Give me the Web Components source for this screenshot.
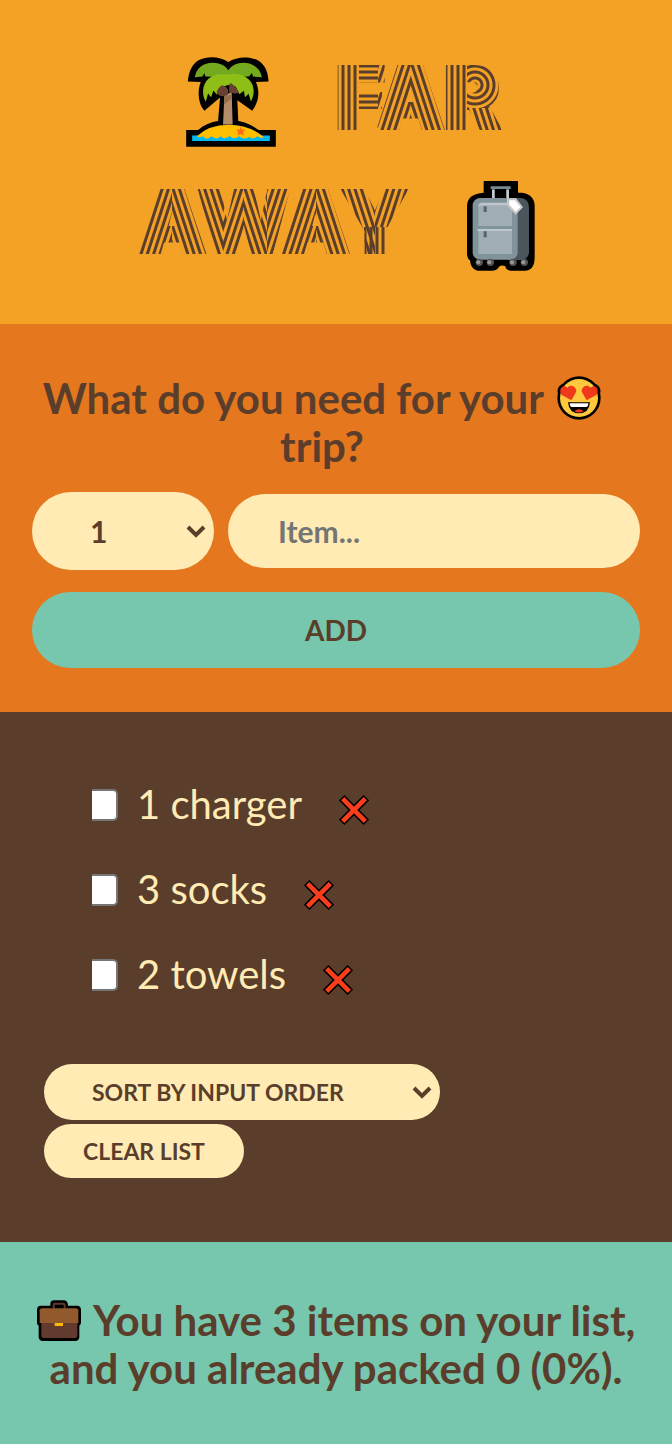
<!DOCTYPE html>
<html lang="en">
<head>
<meta charset="utf-8">
<meta name="viewport" content="width=device-width, initial-scale=1">
<title>Far Away</title>
<style>
  html { --brown: #5a3e2b; --cream: #ffebb3; --teal: #76c7ad; --amber: #f4a226; --orange: #e5771f; }
  body { margin: 0; background: var(--teal); color: var(--brown); font-family: Lato, "Open Sans", sans-serif; }
</style>
</head>
<body>
<travel-app></travel-app>

<template id="t-app">
  <style>
    :host { display: flex; flex-direction: column; min-height: 100vh; }
    packing-stats { flex: 1; }
  </style>
  <travel-logo></travel-logo>
  <travel-form></travel-form>
  <packing-list>
    <packing-item quantity="1">charger</packing-item>
    <packing-item quantity="3">socks</packing-item>
    <packing-item quantity="2">towels</packing-item>
  </packing-list>
  <packing-stats></packing-stats>
</template>

<template id="t-logo">
  <style>
    :host {
      display: block; background: var(--amber); padding: 40px 32px 36px;
      --stops: var(--brown) 0, var(--brown) 2px, transparent 3px, transparent 5px, var(--brown) 6px;
      --up: repeating-linear-gradient(108deg, var(--stops));
      --down: repeating-linear-gradient(72deg, var(--stops));
      --stem: repeating-linear-gradient(90deg, var(--stops));
      --bar: repeating-linear-gradient(180deg, var(--stops));
      --bowl: repeating-radial-gradient(circle at 8px 43px, var(--stops));
    }
    h1 { margin: 0; font: 900 84px/112px Inter, Lato, sans-serif; text-transform: uppercase; }
    .row { display: flex; justify-content: center; align-items: center; gap: 58px; min-height: 124px; }
    .row:first-child { padding-left: 16px; }
    /* Striped lettering: each background strip follows the strokes of the letter above it. */
    .word { padding: 0 2px 8px; color: transparent; -webkit-text-stroke: 4px transparent; background-repeat: no-repeat; -webkit-background-clip: text; background-clip: text; }
    .far {
      background-image: var(--stem), var(--bar), var(--up), var(--down), var(--stem), var(--bowl), var(--down);
      background-size: 23px 100%, 19px 100%, 33px 100%, 34px 100%, 22px 100%, 40px 66px, 40px 60px;
      background-position: 2px 0, 25px 5px, 44px 0, 77px 0, 111px 0, 133px 0, 133px 66px;
    }
    .away {
      background-image: var(--stem), var(--up), var(--down), var(--up), var(--down), var(--up), var(--down), var(--up);
      background-size: 24px 60px, 35px 100%, 51px 100%, 21px 100%, 23px 100%, 49px 100%, 48px 100%, 50px 61px;
      background-position: 227px 61px, 0 0, 35px 0, 86px 0, 107px 0, 130px 0, 179px 0, 227px 0;
      background-size: 24px 60px, 35px 100%, 51px 100%, 21px 100%, 23px 100%, 49px 100%, 59px 100%, 50px 61px;
      background-position: 227px 61px, 0 0, 35px 0, 86px 0, 107px 0, 130px 0, 179px 0, 238px 0;
    }
    travel-icon { flex: none; }
  </style>
  <h1>
    <span class="row"><travel-icon name="palm"></travel-icon><span class="word far">Far</span></span>
    <span class="row"><span class="word away">Away</span><travel-icon name="luggage"></travel-icon></span>
  </h1>
</template>

<template id="t-form">
  <style>
    :host { display: block; background: var(--orange); padding: 50px 32px 44px; }
    h3 { margin: 0 28px 22px 0; font-size: 42px; line-height: 48px; font-weight: 700; text-align: center; }
    travel-icon { margin-left: 4px; vertical-align: -6px; }
    form { display: grid; grid-template-columns: 182px minmax(0, 1fr); gap: 22px 14px; align-items: center; }
    input, button { box-sizing: border-box; width: 100%; border: 0; border-radius: 40px; font: 700 30px/36px Lato, sans-serif; color: var(--brown); }
    input { height: 74px; padding: 0 50px; background: var(--cream); }
    input::placeholder { color: #757575; opacity: 1; }
    button { grid-column: 1 / -1; height: 76px; background: var(--teal); font-size: 28px; text-transform: uppercase; }
    pill-select { --height: 78px; --size: 30px; --pad: 58px; }
  </style>
  <h3>What do you need for your <travel-icon name="love"></travel-icon> trip?</h3>
  <form>
    <pill-select label="Quantity" options="1|2|3|4|5"></pill-select>
    <input type="text" placeholder="Item..." aria-label="Item">
    <button type="button">Add</button>
  </form>
</template>

<template id="t-select">
  <style>
    :host { display: grid; align-items: center; }
    select, svg { grid-area: 1 / 1; }
    select { appearance: none; box-sizing: border-box; width: 100%; height: var(--height); margin: 0; border: 0; border-radius: 40px;
      padding: 0 48px 0 var(--pad); background: var(--cream); color: var(--brown); font: 700 var(--size) Lato, sans-serif; text-transform: uppercase; }
    svg { justify-self: end; margin-right: 8px; pointer-events: none; z-index: 1; }
  </style>
  <select></select>
  <svg width="20" height="13" viewBox="0 0 20 13" aria-hidden="true"><path d="M2 2l8 8 8-8" fill="none" stroke="#5a3e2b" stroke-width="4"/></svg>
</template>

<template id="t-list">
  <style>
    :host { display: block; background: var(--brown); color: var(--cream); padding: 68px 44px 64px; }
    ul { list-style: none; margin: 0 0 65px; padding: 0 48px; display: grid; gap: 36px; }
    .actions { display: grid; justify-items: start; gap: 4px; }
    pill-select { width: 396px; max-width: 100%; --height: 56px; --size: 23px; --pad: 48px; }
    button { height: 54px; padding: 0 39px; border: 0; border-radius: 40px; background: var(--cream); color: var(--brown);
      font: 700 23px Lato, sans-serif; text-transform: uppercase; }
  </style>
  <ul role="list"><slot></slot></ul>
  <div class="actions">
    <pill-select label="Sort order" options="Sort by input order|Sort by description|Sort by packed status"></pill-select>
    <button type="button">Clear list</button>
  </div>
</template>

<template id="t-item">
  <style>
    :host { display: flex; align-items: center; font-size: 40px; line-height: 49px; }
    label { display: flex; align-items: center; gap: 19px; }
    input { appearance: none; margin: 0; width: 26px; height: 32px; box-sizing: border-box; background: #fff;
      border: 2px solid #767676; border-left: 0; border-radius: 0 5px 5px 0; }
    input:checked { background: var(--teal); }
    button { display: flex; margin: 11px 0 0 37px; padding: 0; border: 0; background: none; }
  </style>
  <label><input type="checkbox"><span><span class="quantity"></span> <slot></slot></span></label>
  <button type="button" aria-label="Remove"><travel-icon name="cross"></travel-icon></button>
</template>

<template id="t-stats">
  <style>
    :host { display: block; background: var(--teal); padding: 54px 24px 52px; font-size: 42px; line-height: 48px; font-weight: 700; text-align: center; }
    travel-icon { margin-right: 4px; vertical-align: -5px; }
  </style>
  <footer><travel-icon name="briefcase"></travel-icon> You have 3 items on your list, and you already packed 0 (0%).</footer>
</template>

<script>
  const template = id => document.getElementById('t-' + id).content.cloneNode(true);

  const icons = {
    palm: [90, 90, '39 35 270 271', `
      <path d="M44 109C46 83 55 58 76 45C105 30 142 34 166 50C190 34 229 31 257 46C278 59 286 83 287 109L249 110C259 132 262 164 238 197L193 165L196 228C220 232 240 242 257 255H309V305H39V255H75C92 240 114 231 135 228L141 157L94 197C75 177 72 136 83 110Z" fill="#000"/>
      <path d="M65 96C70 67 91 52 119 52C145 52 160 64 166 75C174 61 191 52 211 52C239 52 262 68 267 96L240 94L237 83L228 94L166 96L97 94L94 83L88 94Z" fill="#73a91e"/>
      <path d="M150 238L154 151L176 140L179 238Z" fill="#b58c69"/><path d="M154 153L176 149L176 160L153 178Z" fill="#946f4c"/>
      <path d="M98 170C82 142 90 107 116 94C130 85 150 86 165 88C187 82 205 88 219 96C245 111 248 145 234 169L227 146L216 156L213 137L199 147L188 124L165 119L145 126L131 148L121 136L114 156L105 145Z" fill="#8dbf16"/>
      <path d="M147 120Q160 123 165 133V148Q154 157 139 151L131 144Q131 130 147 120ZM169 117L174 113L186 124L199 143Q182 149 168 139Z" fill="#6a4131"/>
      <path d="M57 271H291V288H57Z" fill="#00b8ef"/>
      <path d="M71 274Q107 239 167 239Q228 239 273 276L266 280L253 274Q239 286 229 275Q214 287 199 274Q181 286 171 273Q153 286 143 274Q131 287 115 274Q101 288 89 274Q78 280 71 274Z" fill="#ffbe00"/>
      <path d="M203 244L207 253L217 254L210 261L213 271L203 267L194 271L196 261L190 253L200 254Z" fill="#ff6a13"/>`],
    luggage: [68, 90, '49 33 204 270', `
      <path d="M99 33H202V68H214Q250 73 252 106V262Q252 303 221 302H178Q166 300 164 289Q154 284 145 290Q138 304 119 302H80Q60 298 58 271Q50 267 49 252V105Q52 71 99 68Z" fill="#000"/>
      <path d="M120 53H180M128 53V88M171 53V91" stroke="#78898f" stroke-width="8" fill="none"/><path d="M128 60V84M171 60V84" stroke="#c9d0d2" stroke-width="7"/>
      <path d="M172 84H210Q235 86 235 112V247Q233 267 214 270H172Z" fill="#4b555c"/>
      <rect x="66" y="84" width="135" height="185" rx="22" fill="#82949b"/>
      <path d="M83 110Q83 101 94 101H184V168H83ZM83 184H184V252H83Z" fill="#a0adb2"/>
      <path d="M83 110Q83 98 94 98H175V106H94Q86 106 83 110ZM81 177H184V184H81Z" fill="#bdc7cb"/>
      <path d="M99 109H108V126H99ZM99 184H108V202H99Z" fill="#52636b"/>
      <path d="M169 85L196 84L217 112L195 134L169 106Z" fill="#c8c8c8"/><path d="M176 91L193 91L210 111L195 125L176 104Z" fill="#fff"/>
      <g fill="#555"><circle cx="86" cy="277" r="11"/><circle cx="119" cy="277" r="11"/><circle cx="187" cy="277" r="11"/><circle cx="221" cy="277" r="11"/></g>
      <g fill="#999"><circle cx="83" cy="277" r="6"/><circle cx="116" cy="277" r="6"/><circle cx="184" cy="277" r="6"/><circle cx="218" cy="277" r="6"/></g>`],
    love: [44, 44, '39 34 132 132', `
      <path d="M82 107L52 90C42 72 58 58 70 69C83 54 101 70 96 83ZM128 107L158 90C168 72 152 58 140 69C127 54 109 70 114 83Z" stroke="#000" stroke-width="16"/>
      <circle cx="105" cy="100" r="65" fill="#000"/>
      <circle cx="105" cy="100" r="57" fill="#ffc83d"/>
      <path d="M82 107L52 90C42 72 58 58 70 69C83 54 101 70 96 83ZM128 107L158 90C168 72 152 58 140 69C127 54 109 70 114 83Z" fill="#f0391b"/>
      <path d="M72 113H138Q135 146 105 146Q75 146 72 113Z" fill="#000"/><path d="M77 116H133Q133 127 126 127H84Q77 127 77 116Z" fill="#fff"/><path d="M91 140Q105 127 119 140Q105 147 91 140Z" fill="#f0391b"/>`],
    cross: [30, 30, '30 30 90 90', `
      <path d="M38 38L112 112M112 38L38 112" stroke="#000" stroke-width="23"/><path d="M41 41L109 109M109 41L41 109" stroke="#f93d1d" stroke-width="14"/>`],
    briefcase: [44, 41, '24 30 132 123', `
      <path d="M64 47V40Q65 31 75 31H106Q116 32 117 47H145Q155 48 156 58V99Q155 104 151 107V142Q150 152 141 153H39Q30 151 29 142V107Q24 104 24 99V58Q25 48 35 47Z" fill="#000"/>
      <path d="M74 56V45Q74 41 78 41H102Q107 41 107 46V56" fill="none" stroke="#5d382d" stroke-width="6"/>
      <path d="M37 99H145V137Q144 144 138 144H43Q37 143 37 137Z" fill="#633b2e"/><path d="M32 61Q33 55 39 55H141Q148 56 148 61V99H32Z" fill="#915a2d"/><path d="M77 99H102V108H77Z" fill="#ffb900"/>`]
  };

  customElements.define('travel-icon', class extends HTMLElement {
    connectedCallback() {
      if (this.shadowRoot) return;
      const [width, height, box, shapes] = icons[this.getAttribute('name')];
      this.attachShadow({ mode: 'open' }).innerHTML =
        `<style>:host { display: inline-block; line-height: 0; } svg { display: block; }</style>
         <svg width="${width}" height="${height}" viewBox="${box}" aria-hidden="true">${shapes}</svg>`;
    }
  });

  customElements.define('pill-select', class extends HTMLElement {
    connectedCallback() {
      if (this.shadowRoot) return;
      this.attachShadow({ mode: 'open' }).append(template('select'));
      const select = this.shadowRoot.querySelector('select');
      select.setAttribute('aria-label', this.getAttribute('label'));
      for (const text of this.getAttribute('options').split('|')) select.add(new Option(text));
    }
  });

  customElements.define('packing-item', class extends HTMLElement {
    connectedCallback() {
      if (this.shadowRoot) return;
      this.setAttribute('role', 'listitem');
      this.attachShadow({ mode: 'open' }).append(template('item'));
      this.shadowRoot.querySelector('.quantity').textContent = this.getAttribute('quantity');
      this.shadowRoot.querySelector('button').addEventListener('click', () => this.remove());
    }
  });

  for (const [name, id] of [['travel-logo', 'logo'], ['travel-form', 'form'], ['packing-list', 'list'], ['packing-stats', 'stats'], ['travel-app', 'app']]) {
    customElements.define(name, class extends HTMLElement {
      connectedCallback() {
        if (!this.shadowRoot) this.attachShadow({ mode: 'open' }).append(template(id));
      }
    });
  }
</script>
</body>
</html>
